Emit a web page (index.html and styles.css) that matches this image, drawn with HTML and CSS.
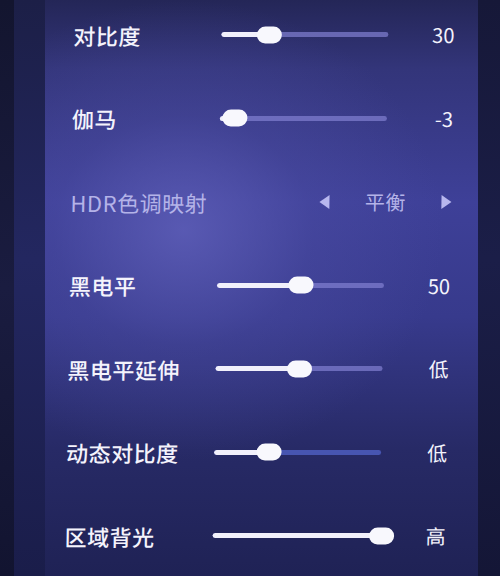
FILE: index.html
```html
<!DOCTYPE html>
<html lang="zh">
<head>
<meta charset="utf-8">
<link rel="stylesheet" href="styles.css">
</head>
<body>
<div class="screen">
  <div class="edge-left"><div class="edge-inner"></div></div>
  <div class="panel">
    <div class="list">
      <div class="row">
        <span class="label">对比度</span>
        <div class="slider"><div class="track"><div class="fill" style="width:29%"></div><div class="thumb" style="left:29%"></div></div></div>
        <span class="value">30</span>
      </div>
      <div class="row">
        <span class="label">伽马</span>
        <div class="slider"><div class="track"><div class="fill" style="width:9%"></div><div class="thumb" style="left:9%"></div></div></div>
        <span class="value">-3</span>
      </div>
      <div class="row">
        <span class="label label-dim">HDR色调映射</span>
        <div class="selector">
          <span class="arrow arrow-left"></span>
          <span class="sel-text">平衡</span>
          <span class="arrow arrow-right"></span>
        </div>
      </div>
      <div class="row">
        <span class="label">黑电平</span>
        <div class="slider"><div class="track"><div class="fill" style="width:50%"></div><div class="thumb" style="left:50%"></div></div></div>
        <span class="value">50</span>
      </div>
      <div class="row">
        <span class="label">黑电平延伸</span>
        <div class="slider"><div class="track"><div class="fill" style="width:50%"></div><div class="thumb" style="left:50%"></div></div></div>
        <span class="value">低</span>
      </div>
      <div class="row">
        <span class="label">动态对比度</span>
        <div class="slider"><div class="track track-blue"><div class="fill" style="width:33%"></div><div class="thumb" style="left:33%"></div></div></div>
        <span class="value">低</span>
      </div>
      <div class="row">
        <span class="label">区域背光</span>
        <div class="slider"><div class="track"><div class="fill" style="width:100%"></div><div class="thumb" style="left:101%"></div></div></div>
        <span class="value">高</span>
      </div>
    </div>
  </div>
  <div class="edge-right"></div>
</div>
</body>
</html>
```
FILE: styles.css
```css
* { box-sizing: border-box; }
html, body {
  margin: 0;
  padding: 0;
  width: 500px;
  height: 576px;
  overflow: hidden;
  background: #151838;
  font-family: "Noto Sans CJK SC", "Noto Sans", sans-serif;
}
.screen {
  display: flex;
  width: 500px;
  height: 576px;
}
.edge-left {
  width: 45px;
  flex: none;
  display: flex;
  background: linear-gradient(180deg, #1c1f47 0%, #232760 45%, #1a1d4a 100%);
}
.edge-inner {
  width: 14px;
  background: linear-gradient(180deg, #13152f 0%, #1a1c40 50%, #121430 100%);
}
.edge-right {
  width: 22px;
  flex: none;
  background: linear-gradient(180deg, #161838 0%, #1b1e48 45%, #141636 100%);
}
.panel {
  flex: 1;
  overflow: hidden;
  background:
    radial-gradient(ellipse 260px 230px at 32% 40%, rgba(98, 98, 188, 0.75) 0%, rgba(80, 80, 168, 0.35) 50%, rgba(60, 62, 140, 0) 100%),
    linear-gradient(180deg, #242657 0%, #33357a 12%, #3e4098 35%, #373a8c 55%, #272a66 78%, #1f2255 100%);
}
.list {
  margin-top: -7px;
  padding: 0 28px 0 24px;
  transform: skewX(-1deg);
  transform-origin: 50% 50%;
}
.row {
  height: 83.5px;
  display: grid;
  grid-template-columns: 148px 167px 1fr;
  align-items: center;
}
.label {
  color: #f4f3fc;
  font-size: 22px;
  font-weight: 500;
  letter-spacing: 0.5px;
  white-space: nowrap;
}
.label-dim {
  color: #b4b3e8;
  font-weight: 400;
}
.slider {
  height: 20px;
  display: flex;
  align-items: center;
}
.track {
  position: relative;
  width: 100%;
  height: 5px;
  border-radius: 3px;
  background: rgba(130, 128, 210, 0.7);
}
.track-blue {
  background: rgba(80, 96, 196, 0.8);
}
.fill {
  height: 100%;
  border-radius: 3px;
  background: #f1f0fb;
}
.thumb {
  position: absolute;
  top: 50%;
  width: 25px;
  height: 17px;
  border-radius: 9px;
  background: #f8f8fd;
  transform: translate(-50%, -50%);
}
.value {
  color: #f4f3fc;
  font-size: 20px;
  text-align: right;
}
.selector {
  grid-column: 2 / 4;
  justify-self: end;
  width: 132px;
  display: flex;
  align-items: center;
  justify-content: space-between;
  color: #b4b3e8;
  font-size: 20px;
}
.sel-text {
  letter-spacing: 0.5px;
}
.arrow {
  width: 0;
  height: 0;
  border-top: 7px solid transparent;
  border-bottom: 7px solid transparent;
}
.arrow-left {
  border-right: 10px solid #b8b7ee;
}
.arrow-right {
  border-left: 10px solid #b8b7ee;
}
```
